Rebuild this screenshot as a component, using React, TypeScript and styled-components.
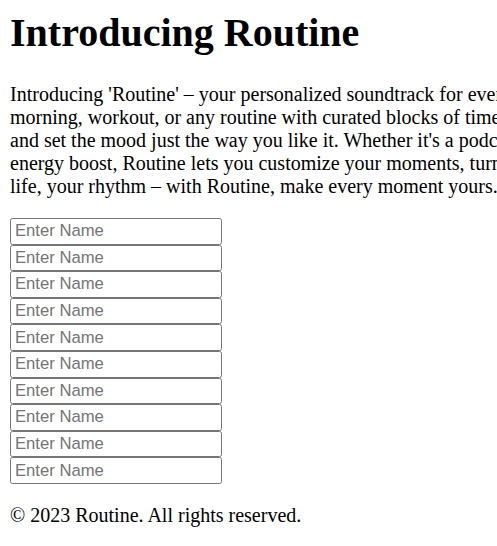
import React from 'react';
import styled, { createGlobalStyle } from 'styled-components';

const GlobalStyle = createGlobalStyle`
  html {
    overflow: hidden;
  }

  body {
    margin: 10px 0 10px 10px;
    font-family: "Liberation Serif", "Times New Roman", serif;
    font-size: 20px;
    color: #000;
    background: #fff;
  }
`;

const Page = styled.div`
  display: flex;
  flex-direction: column;
`;

const Title = styled.h1`
  margin: 0 0 27px;
  font-size: 40px;
  font-weight: 700;
  line-height: 46px;
`;

// the copy runs wider than the window and is cut at its right edge
const Intro = styled.p`
  margin: 0 0 20px;
  overflow: hidden;
  line-height: 23px;
  white-space: nowrap;
`;

const NameList = styled.form`
  display: flex;
  flex-direction: column;
  align-items: flex-start;
`;

const NameInput = styled.input`
  box-sizing: border-box;
  width: 212px;
  height: 26.6px;
  margin: 0;
  padding: 1px 4px;
  border: 1.25px solid #767676;
  border-radius: 2.5px;
  font-family: "Liberation Sans", Arial, sans-serif;
  font-size: 16.67px;
  color: #000;

  &::placeholder {
    color: #757575;
  }
`;

const Footer = styled.footer`
  margin-top: 20px;
  line-height: 23px;
`;

const introLines = [
  "Introducing 'Routine' – your personalized soundtrack for every moment of your day. Build the perfect",
  'morning, workout, or any routine with curated blocks of time. Add your favorite songs, podcasts, and timers',
  "and set the mood just the way you like it. Whether it's a podcast to start your day or a playlist for an",
  'energy boost, Routine lets you customize your moments, turning everyday tasks into rituals. Your',
  'life, your rhythm – with Routine, make every moment yours.',
];

const App = () => {
  return (
    <Page>
      <GlobalStyle />
      <Title>Introducing Routine</Title>
      <Intro>
        {introLines.map((line, i) => (
          <React.Fragment key={i}>
            {line}
            {i < introLines.length - 1 && <br />}
          </React.Fragment>
        ))}
      </Intro>
      <NameList>
        {Array.from({ length: 10 }, (_, i) => (
          <NameInput key={i} type="text" placeholder="Enter Name" />
        ))}
      </NameList>
      <Footer>© 2023 Routine. All rights reserved.</Footer>
    </Page>
  );
};

export default App;
